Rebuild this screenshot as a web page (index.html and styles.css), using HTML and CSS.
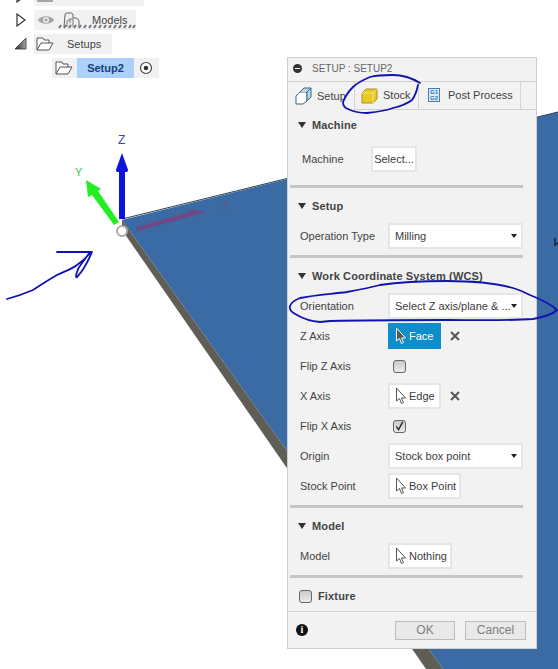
FILE: index.html
```html
<!DOCTYPE html>
<html lang="en">
<head>
    <meta charset="UTF-8">
    <title>Setup : Setup2</title>
    <link rel="stylesheet" href="styles.css">
</head>
<body>
    <!-- 3D viewport -->
    <svg class="viewport" width="558" height="669" viewBox="0 0 558 669">
        <polygon points="122,220 558,112 558,669 443,669" fill="#3b6ba5"/>
        <polygon points="122,220 122,230 426,669 443,669" fill="#5f5d55"/>
        <line x1="122" y1="219" x2="558" y2="112" stroke="#2e3f52" stroke-width="1"/>
        <polygon points="136,227 137,231 190,217 207,212 190,209 189,212" fill="#6d4a86"/>
        <text class="axis-x" x="222" y="209">X</text>
        <rect x="119" y="170" width="6" height="49" fill="#0f13e0"/>
        <path d="M122 153 L127 167 Q129 171 127 172 H117 Q115 171 117 167 Z" fill="#0f13e0"/>
        <text class="axis-z" x="118" y="144">Z</text>
        <polygon points="114,225 119,222 98,191 101,189 86,180 88,197 92,195" fill="#22ee22"/>
        <text class="axis-y" x="75" y="176">Y</text>
        <circle cx="122" cy="231" r="5" fill="#fff" stroke="#a9a9a9" stroke-width="2"/>
        <path d="M555 238 V245 L558 243" fill="none" stroke="#1c2530" stroke-width="1.5"/>
    </svg>

    <!-- browser tree -->
    <div class="tree">
        <div class="tree-row row-models">
            <svg class="twist" width="12" height="14" viewBox="0 0 12 14"><path d="M2 1 L10 7 L2 13 Z" fill="#fff" stroke="#333" stroke-width="1.2"/></svg>
            <div class="node node-top"><span class="top-block"></span></div>
        </div>
        <div class="tree-row row-models">
            <svg class="twist" width="12" height="14" viewBox="0 0 12 14"><path d="M2 1 L10 7 L2 13 Z" fill="#fff" stroke="#333" stroke-width="1.2"/></svg>
            <div class="node node-models">
                <svg width="18" height="12" viewBox="0 0 18 12"><path d="M1 6 C4 1 14 1 17 6 C14 11 4 11 1 6 Z" fill="#a5a5a5"/><circle cx="9" cy="6" r="3" fill="#f1f1f1"/><circle cx="9" cy="6" r="1.6" fill="#a5a5a5"/></svg>
                <svg class="folder-models" width="20" height="20" viewBox="0 0 20 20"><path d="M3 17 L4 5 Q4 3 6 3 H10 Q12 3 12 5 V8 H15 Q17 8 18 11 V17" fill="none" stroke="#666"/><path d="M6 17 V11 L9 9 H12 V17 M9 9 V13" fill="#eee" stroke="#777"/></svg>
                <span class="node-label">Models</span>
            </div>
        </div>
        <div class="tree-row row-setups">
            <svg class="twist" width="12" height="12" viewBox="0 0 12 12"><defs><linearGradient id="tw"><stop offset="0" stop-color="#222"/><stop offset="1" stop-color="#aaa"/></linearGradient></defs><path d="M0 11 L11 0 V11 Z" fill="url(#tw)" stroke="#333" stroke-width=".8"/></svg>
            <div class="node node-setups">
                <svg width="18" height="14" viewBox="0 0 18 14"><path d="M1 13 V1 H7 L8 3 H13 V6 M1 13 L5 6 H17 L13 13 Z" fill="#fff" stroke="#555"/></svg>
                <span class="node-label">Setups</span>
            </div>
        </div>
        <div class="tree-row row-setup2">
            <div class="node node-setup2">
                <svg width="18" height="14" viewBox="0 0 18 14"><path d="M1 13 V1 H7 L8 3 H13 V6 M1 13 L5 6 H17 L13 13 Z" fill="#fff" stroke="#555"/></svg>
                <span class="node-active">Setup2</span>
                <svg width="14" height="14" viewBox="0 0 14 14"><circle cx="7" cy="7" r="5.5" fill="#fff" stroke="#444" stroke-width="1.2"/><circle cx="7" cy="7" r="2.3" fill="#333"/></svg>
            </div>
        </div>
    </div>

    <!-- dialog -->
    <div class="dialog">
        <div class="dialog-title">
            <span class="minus"></span>
            <span>SETUP : SETUP2</span>
        </div>
        <div class="tabs">
            <div class="tab tab-setup">
                <svg width="17" height="18" viewBox="0 0 17 18"><path d="M1 9 L5 5 H12 V14 L8 17 H1 Z" fill="#fff" stroke="#33667f"/><path d="M5 5 L9 1 H16 V10 L12 14 V5 M12 5 L16 1" fill="#bfd9e8" stroke="#33667f"/></svg>
                Setup
            </div>
            <div class="tab tab-stock">
                <svg width="17" height="17" viewBox="0 0 17 17"><path d="M1 6 L5 2 H16 V12 L12 16 H1 Z" fill="#e9c920" stroke="#a8912a"/><path d="M1 6 H12 V16 M12 6 L16 2" fill="none" stroke="#f5e586"/></svg>
                Stock
            </div>
            <div class="tab tab-post">
                <span class="g-code">G1<br>G2</span>
                Post Process
            </div>
        </div>
        <div class="dialog-body">
            <div class="group-head"><span class="caret"></span>Machine</div>
            <div class="row row-machine">
                <label class="row-label machine-label">Machine</label>
                <span class="field field-select-btn">Select...</span>
            </div>
            <div class="divider"></div>

            <div class="group-head"><span class="caret"></span>Setup</div>
            <div class="row">
                <label class="row-label">Operation Type</label>
                <span class="field field-drop">Milling<span class="drop-caret"></span></span>
            </div>
            <div class="divider"></div>

            <div class="group-head"><span class="caret"></span>Work Coordinate System (WCS)</div>
            <div class="row">
                <label class="row-label">Orientation</label>
                <span class="field field-drop">Select Z axis/plane &amp; ...<span class="drop-caret"></span></span>
            </div>
            <div class="row">
                <label class="row-label">Z Axis</label>
                <span class="field field-pick field-active">
                    <svg class="cursor" width="12" height="18" viewBox="0 0 12 18"><path d="M1.5 1 V14 L4.5 11.5 L6.5 16.5 L8.5 15.5 L6.5 11 H10.5 Z" fill="#55595e" stroke="#fff"/></svg>
                    Face
                </span>
                <svg class="clear" width="10" height="10" viewBox="0 0 10 10"><path d="M1 1 L9 9 M9 1 L1 9" stroke="#555" stroke-width="2"/></svg>
            </div>
            <div class="row">
                <label class="row-label">Flip Z Axis</label>
                <span class="check"></span>
            </div>
            <div class="row">
                <label class="row-label">X Axis</label>
                <span class="field field-pick field-edge">
                    <svg class="cursor" width="12" height="18" viewBox="0 0 12 18"><path d="M1.5 1 V14 L4.5 11.5 L6.5 16.5 L8.5 15.5 L6.5 11 H10.5 Z" fill="#fff" stroke="#555"/></svg>
                    Edge
                </span>
                <svg class="clear" width="10" height="10" viewBox="0 0 10 10"><path d="M1 1 L9 9 M9 1 L1 9" stroke="#555" stroke-width="2"/></svg>
            </div>
            <div class="row">
                <label class="row-label">Flip X Axis</label>
                <span class="check">
                    <svg width="12" height="12" viewBox="0 0 12 12"><path d="M2.5 6.5 L5 10 L9.5 1.5" fill="none" stroke="#222" stroke-width="1.4"/></svg>
                </span>
            </div>
            <div class="row">
                <label class="row-label">Origin</label>
                <span class="field field-drop">Stock box point<span class="drop-caret"></span></span>
            </div>
            <div class="row">
                <label class="row-label">Stock Point</label>
                <span class="field field-pick">
                    <svg class="cursor" width="12" height="18" viewBox="0 0 12 18"><path d="M1.5 1 V14 L4.5 11.5 L6.5 16.5 L8.5 15.5 L6.5 11 H10.5 Z" fill="#fff" stroke="#555"/></svg>
                    Box Point
                </span>
            </div>
            <div class="divider"></div>

            <div class="group-head"><span class="caret"></span>Model</div>
            <div class="row">
                <label class="row-label">Model</label>
                <span class="field field-pick">
                    <svg class="cursor" width="12" height="18" viewBox="0 0 12 18"><path d="M1.5 1 V14 L4.5 11.5 L6.5 16.5 L8.5 15.5 L6.5 11 H10.5 Z" fill="#fff" stroke="#555"/></svg>
                    Nothing
                </span>
            </div>
            <div class="divider"></div>

            <div class="group-head fixture-head"><span class="check"></span>Fixture</div>
        </div>
        <div class="dialog-foot">
            <span class="info">i</span>
            <button class="btn">OK</button>
            <button class="btn btn-cancel">Cancel</button>
        </div>
    </div>

    <!-- pen marks on top of everything -->
    <svg class="ink" width="558" height="669" viewBox="0 0 558 669" fill="none" stroke="#1212b0" stroke-width="1.8" stroke-linecap="round" stroke-linejoin="round">
        <path d="M7 299 C18 296 26 293 33 290 C42 284 50 279 57 275 C65 271 72 269 77 265 C83 261 87 257 90 253 M57 252 H92 C89 259 84 270 77 277 C75 279 76 270 82 263 C85 259 88 255 90 252"/>
        <path d="M420 83 C412 78 403 75 393 75 C384 75 377 75 370 77 C363 80 357 83 353 87 C348 92 345 97 343 102 C343 106 345 108 348 109 C354 112 360 113 367 113 C376 112 385 111 393 108 C401 106 407 104 412 100 C415 96 417 90 418 85"/>
        <path d="M320 322 C308 321 302 318 297 315 C291 312 289 309 290 306 C291 302 295 300 300 298 C315 295 332 294 347 292 C358 290 369 288 380 285 C400 282 425 281 447 281 C470 281 495 283 513 288 C520 290 526 293 530 295 C540 299 552 305 557 310 C553 314 544 317 533 319 C505 321 475 320 447 320 C408 320 369 320 330 321 L320 322"/>
        <path class="mark-dots" d="M59 28 l2 -3 M64 28 l2 -3 M69 28 l2 -3 M74 28 l2 -3 M79 28 l2 -3 M84 28 l2 -3 M89 28 l2 -3 M94 28 l2 -3 M99 28 l2 -3 M104 28 l2 -3 M109 28 l2 -3 M114 28 l2 -3 M119 28 l2 -3 M124 28 l2 -3 M129 28 l2 -3 M133 28 l2 -3"/>
    </svg>
</body>
</html>
```

FILE: styles.css
```css
html, body {
    margin: 0;
    padding: 0;
}
body {
    position: relative;
    width: 558px;
    height: 669px;
    overflow: hidden;
    background: #fff;
    font-family: "Liberation Sans", Arial, sans-serif;
    font-size: 12px;
    color: #3c3c3c;
}
.viewport, .ink {
    position: absolute;
    left: 0;
    top: 0;
}
.ink {
    pointer-events: none;
}
.mark-dots {
    stroke: #70767e;
    stroke-width: 2;
    stroke-linecap: butt;
}
.axis-x { font-size: 11px; fill: #5f5590; }
.axis-y { font-size: 11px; fill: #37c85a; }
.axis-z { font-size: 12px; fill: #3b45b5; }

/* tree */
.tree {
    position: absolute;
    left: 0;
    top: -16px;
}
.tree-row {
    display: flex;
    align-items: center;
    height: 24px;
}
.twist {
    flex: none;
}
.node {
    display: flex;
    align-items: center;
    height: 20px;
    background: #f1f1f2;
}
.node-top {
    width: 110px;
    align-items: flex-end;
    padding-left: 3px;
    box-sizing: border-box;
}
.top-block {
    width: 16px;
    height: 8px;
    margin-bottom: 4px;
    background: #a5a5a5;
}
.row-models { padding-left: 15px; }
.row-models .twist { margin-right: 7px; }
.node-models {
    width: 102px;
    padding-left: 3px;
    box-sizing: border-box;
}
.folder-models { margin: 0 11px 0 6px; }
.row-setups { padding-left: 15px; }
.row-setups .twist { margin-right: 7px; }
.node-setups {
    width: 78px;
    padding-left: 2px;
    box-sizing: border-box;
}
.node-label {
    font-size: 11px;
    color: #444;
}
.node-setups .node-label { margin-left: 13px; }
.row-setup2 { padding-left: 52px; }
.node-setup2 {
    width: 107px;
    height: 20px;
    padding-left: 3px;
    box-sizing: border-box;
}
.node-active {
    width: 57px;
    line-height: 20px;
    margin: 0 5px 0 4px;
    background: #abd0fa;
    color: #11427c;
    font-size: 11px;
    font-weight: bold;
    text-align: center;
}

/* dialog */
.dialog {
    position: absolute;
    left: 287px;
    top: 57px;
    width: 250px;
    height: 592px;
    box-sizing: border-box;
    border: 1px solid #cfcfcf;
    background: #f2f2f2;
    display: flex;
    flex-direction: column;
    font-size: 11px;
}
.dialog-title {
    height: 24px;
    box-sizing: border-box;
    display: flex;
    align-items: center;
    gap: 10px;
    padding: 0 0 2px 5px;
    color: #666;
    font-size: 10px;
    border-bottom: 1px solid #d0d0d0;
}
.minus {
    width: 9px;
    height: 9px;
    border-radius: 50%;
    background: #333;
    position: relative;
}
.minus::after {
    content: "";
    position: absolute;
    left: 2px;
    top: 4px;
    width: 5px;
    height: 1px;
    background: #fff;
}
.tabs {
    height: 28px;
    display: flex;
    box-sizing: border-box;
    border-bottom: 1px solid #d0d0d0;
    color: #444;
    font-size: 11px;
}
.tab {
    display: flex;
    align-items: center;
    box-sizing: border-box;
    gap: 5px;
    padding-bottom: 1px;
    border-right: 1px solid #d4d4d4;
}
.tab-setup {
    width: 67px;
    padding-left: 7px;
    background: #f2f2f2;
    height: 28px;
}
.tab-stock {
    width: 64px;
    padding-left: 6px;
}
.tab-post {
    width: 102px;
    padding-left: 9px;
    gap: 8px;
}
.g-code {
    width: 12px;
    height: 14px;
    border: 1px solid #4a7ea8;
    background: #dbe9f5;
    color: #2a77b5;
    font-size: 6px;
    font-weight: bold;
    line-height: 6px;
    text-align: center;
    box-sizing: border-box;
}
.dialog-body {
    flex: 1;
    padding: 0 0 0 2px;
}
.group-head {
    height: 30px;
    display: flex;
    align-items: center;
    font-weight: bold;
    letter-spacing: 0.15px;
    color: #444;
    padding-left: 8px;
}
.caret {
    width: 0;
    height: 0;
    border-left: 4px solid transparent;
    border-right: 4px solid transparent;
    border-top: 6px solid #333;
    margin-right: 6px;
}
.row {
    height: 30px;
    display: flex;
    align-items: center;
    padding-left: 10px;
}
.row-machine {
    margin: 4px 0 11px;
}
.row-label {
    width: 88px;
    flex: none;
    color: #444;
}
.machine-label {
    padding-left: 2px;
    box-sizing: border-box;
    width: 71px;
}
.field {
    height: 26px;
    box-sizing: border-box;
    border: 2px solid #e6e6e6;
    background: #fff;
    display: flex;
    align-items: center;
    color: #3c3c3c;
}
.field-select-btn {
    width: 46px;
    justify-content: center;
}
.field-drop {
    width: 135px;
    padding-left: 5px;
    position: relative;
}
.drop-caret {
    position: absolute;
    right: 4px;
    top: 9px;
    width: 0;
    height: 0;
    border-left: 3px solid transparent;
    border-right: 3px solid transparent;
    border-top: 4px solid #222;
}
.field-pick {
    padding: 0 3px 0 5px;
    gap: 2px;
}
.field-active, .field-edge {
    width: 53px;
}
.field-active {
    background: #0f8fca;
    border-color: #0f8fca;
    color: #fff;
}
.cursor {
    flex: none;
}
.clear {
    flex: none;
    margin-left: 9px;
}
.check {
    width: 13px;
    height: 13px;
    box-sizing: border-box;
    border: 1px solid #666;
    border-radius: 3px;
    background: linear-gradient(#c9c9c9, #ebebeb);
    margin-left: 5px;
    display: flex;
    align-items: center;
    justify-content: center;
}
.divider {
    height: 3px;
    width: 233px;
    margin: 4px 0 3px;
    background: #c6c6c6;
}
.fixture-head {
    padding-left: 8px;
}
.fixture-head .check {
    margin: 0 6px 0 1px;
}
.dialog-foot {
    height: 36px;
    display: flex;
    align-items: center;
    gap: 10px;
    border-top: 1px solid #d0d0d0;
    padding: 0 10px 0 8px;
}
.info {
    width: 12px;
    height: 12px;
    border-radius: 50%;
    background: #111;
    color: #fff;
    font-family: "Liberation Serif", serif;
    font-size: 10px;
    font-weight: bold;
    line-height: 12px;
    text-align: center;
    margin-right: auto;
}
.btn {
    width: 60px;
    height: 19px;
    padding: 0;
    box-sizing: border-box;
    border: 1px solid #bdbdbd;
    background: #e9e9e9;
    color: #7d7d7d;
    font-family: "Liberation Sans", Arial, sans-serif;
    font-size: 12px;
}
.btn-cancel {
    width: 61px;
}
```
